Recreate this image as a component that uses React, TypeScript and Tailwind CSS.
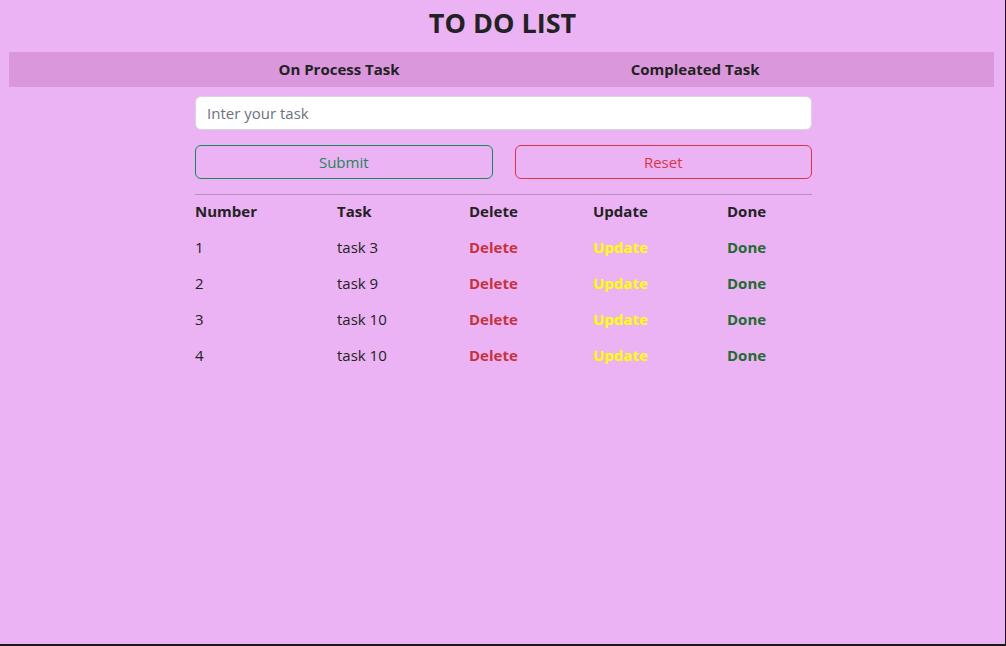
const tasks = [
  { id: 1, title: "task 3" },
  { id: 2, title: "task 9" },
  { id: 3, title: "task 10" },
  { id: 4, title: "task 10" },
];

const font = "font-['Comic_Sans_MS','Open_Sans',sans-serif]";

export default function App() {
  return (
    <div
      className={`h-[646px] w-full bg-[#ecb3f4] border-r border-b-2 border-[#1a1a1a] text-[#222] ${font}`}
    >
      <h1 className="pt-[7px] h-[52px] text-center text-[27px] leading-[32px] font-bold">
        TO DO LIST
      </h1>

      <nav className="mx-[9px] mr-[11px] h-[35px] bg-[#db97db] flex items-center">
        <div className="ml-[154px] w-[712px] flex justify-around text-[15px] font-bold">
          <span>On Process Task</span>
          <span>Compleated Task</span>
        </div>
      </nav>

      <div className="w-[617px] ml-[195px] pt-[9px]">
        <input
          type="text"
          placeholder="Inter your task"
          className="w-full h-[34px] rounded-md bg-white border border-[#d6d6dc] px-[11px] text-[15px] placeholder:text-[#6b7280] outline-none"
        />

        <div className="mt-[15px] flex gap-[22px]">
          <button className="flex-1 h-[34px] rounded-md border border-[#198754] text-[#198754] text-[15px]">
            Submit
          </button>
          <button className="flex-1 h-[34px] rounded-md border border-[#dc3545] text-[#dc3545] text-[15px]">
            Reset
          </button>
        </div>

        <hr className="mt-[15px] border-t border-[#b98fc0]" />

        <div className="-mt-[2px] grid grid-cols-[142px_132px_124px_134px_1fr] text-[15px]">
          <div className="contents font-bold">
            <span className="h-[36px] flex items-center">Number</span>
            <span className="h-[36px] flex items-center">Task</span>
            <span className="h-[36px] flex items-center">Delete</span>
            <span className="h-[36px] flex items-center">Update</span>
            <span className="h-[36px] flex items-center">Done</span>
          </div>
          {tasks.map((t) => (
            <div key={t.id} className="contents">
              <span className="h-[36px] flex items-center">{t.id}</span>
              <span className="h-[36px] flex items-center">{t.title}</span>
              <span className="h-[36px] flex items-center font-bold text-[#c8323c]">Delete</span>
              <span className="h-[36px] flex items-center font-bold text-[#ffff00]">Update</span>
              <span className="h-[36px] flex items-center font-bold text-[#1e6b30]">Done</span>
            </div>
          ))}
        </div>
      </div>
    </div>
  );
}
